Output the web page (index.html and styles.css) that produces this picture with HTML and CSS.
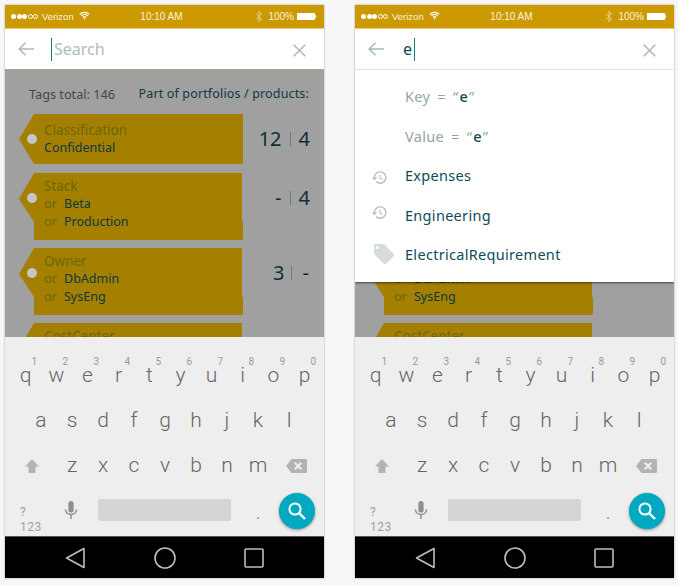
FILE: index.html
```html
<!DOCTYPE html>
<html lang="en">
<head>
<meta charset="utf-8">
<title>Tag search</title>
<link rel="stylesheet" href="styles.css">
</head>
<body>
<svg class="sprite" aria-hidden="true">
  <symbol id="i-wifi" viewBox="0 0 12 9"><path d="M.8 3.2a7.4 7.4 0 0 1 10.4 0M2.5 5a5 5 0 0 1 7 0M4.2 6.7a2.6 2.6 0 0 1 3.6 0" fill="none" stroke="currentColor" stroke-width="1.3"/><path d="M6 9 4.9 7.900a1.500 1.500 0 0 1 2.200 0z" fill="currentColor"/></symbol>
  <symbol id="i-bt" viewBox="0 0 8 13"><path d="M1 3.5 6.5 9 4 11.6V1.4L6.5 4 1 9.5" fill="none" stroke="currentColor" stroke-width="1"/></symbol>
  <symbol id="i-back" viewBox="0 0 16 14"><path d="M16 7H1.2M7.5.8 1.2 7l6.3 6.2" fill="none" stroke="currentColor" stroke-width="1.5"/></symbol>
  <symbol id="i-close" viewBox="0 0 13 13"><path d="m.7.7 11.6 11.6M12.3.7.7 12.3" fill="none" stroke="currentColor" stroke-width="1.5"/></symbol>
  <symbol id="i-history" viewBox="0 0 24 24"><path fill="currentColor" d="M13 3a9 9 0 0 0-9 9H1l3.89 3.89.07.14L9 12H6c0-3.87 3.13-7 7-7s7 3.13 7 7-3.13 7-7 7c-1.93 0-3.68-.79-4.94-2.06l-1.42 1.42A8.954 8.954 0 0 0 13 21a9 9 0 0 0 0-18zm-1 5v5l4.28 2.54.72-1.21-3.5-2.08V8H12z"/></symbol>
  <symbol id="i-tag" viewBox="0 0 24 24"><path fill="currentColor" d="M21.41 11.58l-9-9C12.05 2.22 11.55 2 11 2H4c-1.1 0-2 .9-2 2v7c0 .55.22 1.05.59 1.42l9 9c.36.36.86.58 1.41.58.55 0 1.05-.22 1.41-.59l7-7c.37-.36.59-.86.59-1.41 0-.55-.23-1.06-.59-1.42zM5.5 7C4.67 7 4 6.33 4 5.5S4.67 4 5.5 4 7 4.67 7 5.5 6.33 7 5.5 7z"/></symbol>
  <symbol id="i-shift" viewBox="0 0 14 14"><path fill="currentColor" d="M7 0 14 7.5H10.5V14H3.5V7.5H0z"/></symbol>
  <symbol id="i-del" viewBox="0 0 21 14"><path fill="currentColor" fill-rule="evenodd" d="M5.5 0H20a1 1 0 0 1 1 1v12a1 1 0 0 1-1 1H5.500L0 7zM9.500 3 8 4.500 10.500 7 8 9.500 9.500 11 12 8.500 14.500 11 16 9.500 13.500 7 16 4.500 14.500 3 12 5.500z"/></symbol>
  <symbol id="i-mic" viewBox="0 0 14 18"><path fill="currentColor" d="M7 11.500A2.600 2.600 0 0 0 9.600 8.900V2.600a2.600 2.600 0 0 0-5.200 0v6.300A2.600 2.600 0 0 0 7 11.500z"/><path fill="none" stroke="currentColor" stroke-width="1.500" d="M1.500 8.500c0 3.200 2.500 5 5.500 5s5.500-1.800 5.500-5M7 13.500V18"/></symbol>
  <symbol id="i-search" viewBox="0 0 18 18"><circle cx="7" cy="7" r="5.600" fill="none" stroke="currentColor" stroke-width="2"/><path d="m11 11 6 6" fill="none" stroke="currentColor" stroke-width="2.400"/></symbol>
  <symbol id="i-navback" viewBox="0 0 20 22"><path d="M19 1.500V20.500L1.500 11z" fill="none" stroke="currentColor" stroke-width="1.600" stroke-linejoin="round"/></symbol>
  <symbol id="i-navhome" viewBox="0 0 22 22"><circle cx="11" cy="11" r="10" fill="none" stroke="currentColor" stroke-width="1.600"/></symbol>
  <symbol id="i-navrecent" viewBox="0 0 20 20"><rect x="1" y="1" width="18" height="18" rx="1" fill="none" stroke="currentColor" stroke-width="1.600"/></symbol>
</svg>

<main class="screens">

<section class="phone">
  <div class="status">
    <div class="status-left">
      <span class="dots"><i class="dot"></i><i class="dot"></i><i class="dot"></i><i class="dot off"></i><i class="dot off"></i></span>
      <span>Verizon</span>
      <svg class="ic-wifi"><use href="#i-wifi"/></svg>
    </div>
    <div class="status-time">10:10 AM</div>
    <div class="status-right">
      <svg class="ic-bt"><use href="#i-bt"/></svg>
      <span>100%</span>
      <span class="battery"></span>
    </div>
  </div>
  <div class="search search-empty">
    <svg class="ic-back"><use href="#i-back"/></svg>
    <div class="query"><span class="caret"></span><span class="placeholder">Search</span></div>
    <svg class="ic-close"><use href="#i-close"/></svg>
  </div>
  <div class="content">
    <div class="summary">
      <span class="total">Tags total: 146</span>
      <span class="part">Part of portfolios / products:</span>
    </div>
    <div class="tag-row">
      <div class="tag tag-single">
        <div class="tag-key">Classification</div>
        <div class="tag-val">Confidential</div>
      </div>
      <div class="counts"><span class="count">12</span><span class="sep"></span><span class="count">4</span></div>
    </div>
    <div class="tag-row">
      <div class="tag tag-double">
        <div class="tag-key">Stack</div>
        <div class="tag-line"><span class="or">or</span><span class="tag-val">Beta</span></div>
        <div class="tag-line"><span class="or">or</span><span class="tag-val">Production</span></div>
      </div>
      <div class="counts counts-high"><span class="count">-</span><span class="sep"></span><span class="count">4</span></div>
    </div>
    <div class="tag-row">
      <div class="tag tag-double">
        <div class="tag-key">Owner</div>
        <div class="tag-line"><span class="or">or</span><span class="tag-val">DbAdmin</span></div>
        <div class="tag-line"><span class="or">or</span><span class="tag-val">SysEng</span></div>
      </div>
      <div class="counts counts-high"><span class="count">3</span><span class="sep sep-tight"></span><span class="count count-wide">-</span></div>
    </div>
    <div class="tag-row">
      <div class="tag tag-double">
        <div class="tag-key">CostCenter</div>
      </div>
    </div>
  </div>
  <div class="keyboard">
    <div class="kb-row">
      <span class="key">q<sup class="num">1</sup></span><span class="key">w<sup class="num">2</sup></span><span class="key">e<sup class="num">3</sup></span><span class="key">r<sup class="num">4</sup></span><span class="key">t<sup class="num">5</sup></span><span class="key">y<sup class="num">6</sup></span><span class="key">u<sup class="num">7</sup></span><span class="key">i<sup class="num">8</sup></span><span class="key">o<sup class="num">9</sup></span><span class="key">p<sup class="num">0</sup></span>
    </div>
    <div class="kb-row kb-indent">
      <span class="key">a</span><span class="key">s</span><span class="key">d</span><span class="key">f</span><span class="key">g</span><span class="key">h</span><span class="key">j</span><span class="key">k</span><span class="key">l</span>
    </div>
    <div class="kb-row">
      <span class="key key-shift"><svg class="ic-shift"><use href="#i-shift"/></svg></span>
      <span class="key">z</span><span class="key">x</span><span class="key">c</span><span class="key">v</span><span class="key">b</span><span class="key">n</span><span class="key">m</span>
      <span class="key key-del"><svg class="ic-del"><use href="#i-del"/></svg></span>
    </div>
    <div class="kb-row kb-bottom">
      <span class="sym">?<br>123</span>
      <svg class="ic-mic"><use href="#i-mic"/></svg>
      <span class="space"></span>
      <span class="period">.</span>
      <span class="go"><svg class="ic-search"><use href="#i-search"/></svg></span>
    </div>
  </div>
  <nav class="navbar">
    <svg class="ic-navback"><use href="#i-navback"/></svg>
    <svg class="ic-navhome"><use href="#i-navhome"/></svg>
    <svg class="ic-navrecent"><use href="#i-navrecent"/></svg>
  </nav>
</section>

<section class="phone">
  <div class="status">
    <div class="status-left">
      <span class="dots"><i class="dot"></i><i class="dot"></i><i class="dot"></i><i class="dot off"></i><i class="dot off"></i></span>
      <span>Verizon</span>
      <svg class="ic-wifi"><use href="#i-wifi"/></svg>
    </div>
    <div class="status-time">10:10 AM</div>
    <div class="status-right">
      <svg class="ic-bt"><use href="#i-bt"/></svg>
      <span>100%</span>
      <span class="battery"></span>
    </div>
  </div>
  <div class="search search-typed">
    <svg class="ic-back"><use href="#i-back"/></svg>
    <div class="query"><span class="typed">e</span><span class="caret"></span></div>
    <svg class="ic-close"><use href="#i-close"/></svg>
  </div>
  <div class="content">
    <div class="summary">
      <span class="total">Tags total: 146</span>
      <span class="part">Part of portfolios / products:</span>
    </div>
    <div class="tag-row">
      <div class="tag tag-single">
        <div class="tag-key">Classification</div>
        <div class="tag-val">Confidential</div>
      </div>
    </div>
    <div class="tag-row">
      <div class="tag tag-double">
        <div class="tag-key">Stack</div>
      </div>
    </div>
    <div class="tag-row">
      <div class="tag tag-double">
        <div class="tag-key">Owner</div>
        <div class="tag-line"><span class="or">or</span><span class="tag-val">DbAdmin</span></div>
        <div class="tag-line"><span class="or">or</span><span class="tag-val">SysEng</span></div>
      </div>
    </div>
    <div class="tag-row">
      <div class="tag tag-double">
        <div class="tag-key">CostCenter</div>
      </div>
    </div>
    <ul class="suggest">
      <li class="sg-item sg-muted">Key = “<b class="sg-em">e</b>”</li>
      <li class="sg-item sg-muted">Value = “<b class="sg-em">e</b>”</li>
      <li class="sg-item"><svg class="ic-history"><use href="#i-history"/></svg>Expenses</li>
      <li class="sg-item"><svg class="ic-history ic-history-up"><use href="#i-history"/></svg>Engineering</li>
      <li class="sg-item"><svg class="ic-tag"><use href="#i-tag"/></svg>ElectricalRequirement</li>
    </ul>
  </div>
  <div class="keyboard">
    <div class="kb-row">
      <span class="key">q<sup class="num">1</sup></span><span class="key">w<sup class="num">2</sup></span><span class="key">e<sup class="num">3</sup></span><span class="key">r<sup class="num">4</sup></span><span class="key">t<sup class="num">5</sup></span><span class="key">y<sup class="num">6</sup></span><span class="key">u<sup class="num">7</sup></span><span class="key">i<sup class="num">8</sup></span><span class="key">o<sup class="num">9</sup></span><span class="key">p<sup class="num">0</sup></span>
    </div>
    <div class="kb-row kb-indent">
      <span class="key">a</span><span class="key">s</span><span class="key">d</span><span class="key">f</span><span class="key">g</span><span class="key">h</span><span class="key">j</span><span class="key">k</span><span class="key">l</span>
    </div>
    <div class="kb-row">
      <span class="key key-shift"><svg class="ic-shift"><use href="#i-shift"/></svg></span>
      <span class="key">z</span><span class="key">x</span><span class="key">c</span><span class="key">v</span><span class="key">b</span><span class="key">n</span><span class="key">m</span>
      <span class="key key-del"><svg class="ic-del"><use href="#i-del"/></svg></span>
    </div>
    <div class="kb-row kb-bottom">
      <span class="sym">?<br>123</span>
      <svg class="ic-mic"><use href="#i-mic"/></svg>
      <span class="space"></span>
      <span class="period">.</span>
      <span class="go"><svg class="ic-search"><use href="#i-search"/></svg></span>
    </div>
  </div>
  <nav class="navbar">
    <svg class="ic-navback"><use href="#i-navback"/></svg>
    <svg class="ic-navhome"><use href="#i-navhome"/></svg>
    <svg class="ic-navrecent"><use href="#i-navrecent"/></svg>
  </nav>
</section>

</main>
</body>
</html>
```

FILE: styles.css
```css
* { box-sizing: border-box; }
html, body { margin: 0; height: 100%; }
body { background: #f7f7f7; overflow: hidden; font-family: "Noto Sans", "Liberation Sans", sans-serif; }
.sprite { display: none; }

.screens { display: flex; gap: 31px; padding: 5px 0 0 5px; }
.phone {
  position: relative; width: 319px; height: 573px; display: flex; flex-direction: column;
  background: #eee; box-shadow: 0 0 2px rgba(0,0,0,.35); overflow: hidden;
}

/* status bar */
.status {
  flex: none; height: 24px; background: #cc9900; border-bottom: 1px solid #e6cf80; color: #fbf3dc;
  display: grid; grid-template-columns: 1fr auto 1fr; align-items: center; padding: 0 7px 0 6px;
  font: 400 9.500px "Liberation Sans", sans-serif;
}
.status-left { display: flex; align-items: center; gap: 4px; }
.status-right { display: flex; align-items: center; justify-content: flex-end; gap: 3px; font-size: 10px; }
.status-time { font-size: 10px; margin-right: 5px; }
.dots { display: flex; gap: .5px; }
.dot { width: 5px; height: 5px; border-radius: 50%; background: #fff; }
.dot.off { background: transparent; border: .5px solid #fff; }
.ic-wifi { width: 11px; height: 9px; color: #fff; margin: -3px 0 0 1px; }
.ic-bt { width: 8px; height: 13px; color: #eed; opacity: .7; margin-right: 2px; }
.battery { position: relative; width: 18px; height: 7px; background: #fff; margin-right: 2px; }
.battery::after { content: ""; position: absolute; left: 18px; top: 2px; width: 1px; height: 3px; background: #fff; }

/* search bar */
.search {
  flex: none; height: 41px; background: #fff; display: flex; align-items: center; padding: 0 18px 0 13px;
  position: relative;
}
.search-empty { border-bottom: 1px solid #b3a67e; }
.search-typed { border-bottom: 1px solid #e5e5e5; z-index: 3; }
.ic-back { width: 16px; height: 14px; color: #a9b8bb; flex: none; }
.ic-close { width: 13px; height: 13px; color: #a9b8bb; flex: none; margin-top: 2px; }
.query { flex: 1; display: flex; align-items: center; margin-left: 17px; height: 24px; }
.caret { width: 1px; height: 23px; background: #0d7f78; flex: none; }
.placeholder { font-size: 16px; color: #aebdc0; margin-left: 2px; }
.typed { font-size: 16px; color: #0f4b57; margin: 0 2px 0 2px; }

/* list behind overlay */
.content {
  position: relative; flex: 1; min-height: 0; overflow: hidden; background: #a0a0a0; padding: 0 14px;
}
.summary { display: flex; justify-content: space-between; align-items: center; height: 44px; padding: 3px 0 0 10px; }
.total { font-size: 12.700px; color: #3f4a4d; }
.part { font-size: 12.500px; letter-spacing: .15px; color: #0e3a42; margin-right: 1px; }
.tag-row { display: flex; margin-bottom: 8px; }
.tag {
  position: relative; width: 224px; background: #a57f00; padding: 0 0 0 25px; flex: none;
  font-size: 12.500px; line-height: 17.300px;
}
.tag::before { content: ""; position: absolute; left: 8px; width: 10px; height: 10px; border-radius: 50%; background: #c6c6c6; }
.tag-single { height: 50px; margin-bottom: 1px; padding-top: 8px; clip-path: polygon(15px 0, 100% 0, 100% 100%, 15px 100%, 0 25px); }
.tag-single::before { top: 20px; }
.tag-double {
  height: 67px; padding-top: 5px;
  clip-path: polygon(15px 0, 223px 0, 223px 49px, 224px 49px, 224px 66px, 223px 67px, 15px 67px, 15px 49px, 0 26px);
}
.tag-double::before { top: 20px; }
.tag-key { color: #6a6800; font-size: 13.500px; }
.tag-val { color: #0c3a3f; }
.tag-line { display: flex; }
.or { width: 20px; color: #6a6800; font-size: 13px; }
.counts {
  flex: 1; display: flex; justify-content: flex-end; align-items: center; height: 50px;
  color: #0e2f38; font-size: 20px;
}
.counts-high { height: 49px; }
.count { line-height: 1; }
.count-wide { margin-right: 1px; margin-left: 3px; }
.sep { width: 1px; height: 14px; background: #6f7a7c; margin: 0 8px 0 8px; }
.sep-tight { margin-left: 6px; }

/* dropdown */
.suggest {
  position: absolute; left: 0; right: 0; top: 0; margin: 0; padding: 6.500px 0 0; list-style: none;
  height: 212px; background: #fff; box-shadow: 0 1px 2px rgba(0,0,0,.6); z-index: 2;
}
.sg-item {
  position: relative; height: 39.500px; display: flex; align-items: center; padding-left: 50px;
  font-size: 14.500px; color: #0f4b57; letter-spacing: .3px;
}
.sg-muted { color: #94a4a7; white-space: pre; word-spacing: 3px; }
.sg-em { color: #0f4b57; font-weight: 500; margin: 0 1px; }
.ic-history { position: absolute; left: 16px; top: 13px; width: 17px; height: 17px; color: #b4bfc1; }
.ic-history-up { top: 8.500px; }
.ic-tag { position: absolute; left: 17px; top: 7px; width: 24px; height: 24px; color: #d6dcdc; }

/* keyboard */
.keyboard { flex: none; height: 199px; background: #eee; padding: 16px 5px 0 5px; font-family: Roboto, sans-serif; }
.kb-row { display: flex; height: 45px; }
.kb-indent { padding-left: 15.500px; }
.kb-bottom { height: 44px; align-items: center; position: relative; }
.key {
  position: relative; width: 31px; flex: none; height: 45px; display: flex; align-items: center; justify-content: center;
  font-size: 21px; font-weight: 300; color: #666; line-height: 1;
}
.key-shift { width: 44px; margin-right: 2.500px; }
.key-del { margin-left: 7px; }
.num { position: absolute; right: 4px; top: 2px; font-size: 10px; color: #9a9a9a; font-weight: 400; line-height: 14px; vertical-align: baseline; }
.ic-shift { width: 14px; height: 14px; color: #b3b3b3; }
.ic-del { width: 21px; height: 14px; color: #b3b3b3; }
.sym { width: 54px; padding: 20px 0 0 10px; font-size: 12px; line-height: 15px; color: #9e9e9e; letter-spacing: .5px; }
.ic-mic { width: 14px; height: 18px; color: #8f8f8f; flex: none; margin-right: 20px; }
.space { width: 133px; height: 22px; background: #d5d5d5; border-radius: 2px; flex: none; }
.period { width: 54px; text-align: center; font-size: 16px; color: #888; padding-top: 7px; }
.go {
  width: 36px; height: 36px; border-radius: 50%; background: #00a9bf; display: flex; align-items: center; justify-content: center;
  box-shadow: 0 1px 3px rgba(0,0,0,.4); color: #fff; flex: none; margin: 1px 0 0 -6px;
}
.ic-search { width: 18px; height: 18px; color: #fff; }

/* nav */
.navbar {
  flex: none; height: 42px; background: #000; border-top: 1px solid #555; color: #bdbdbd;
  display: flex; align-items: center; justify-content: space-between; padding: 0 60px;
}
.ic-navback { width: 20px; height: 22px; }
.ic-navhome { width: 22px; height: 22px; }
.ic-navrecent { width: 20px; height: 20px; }
```
